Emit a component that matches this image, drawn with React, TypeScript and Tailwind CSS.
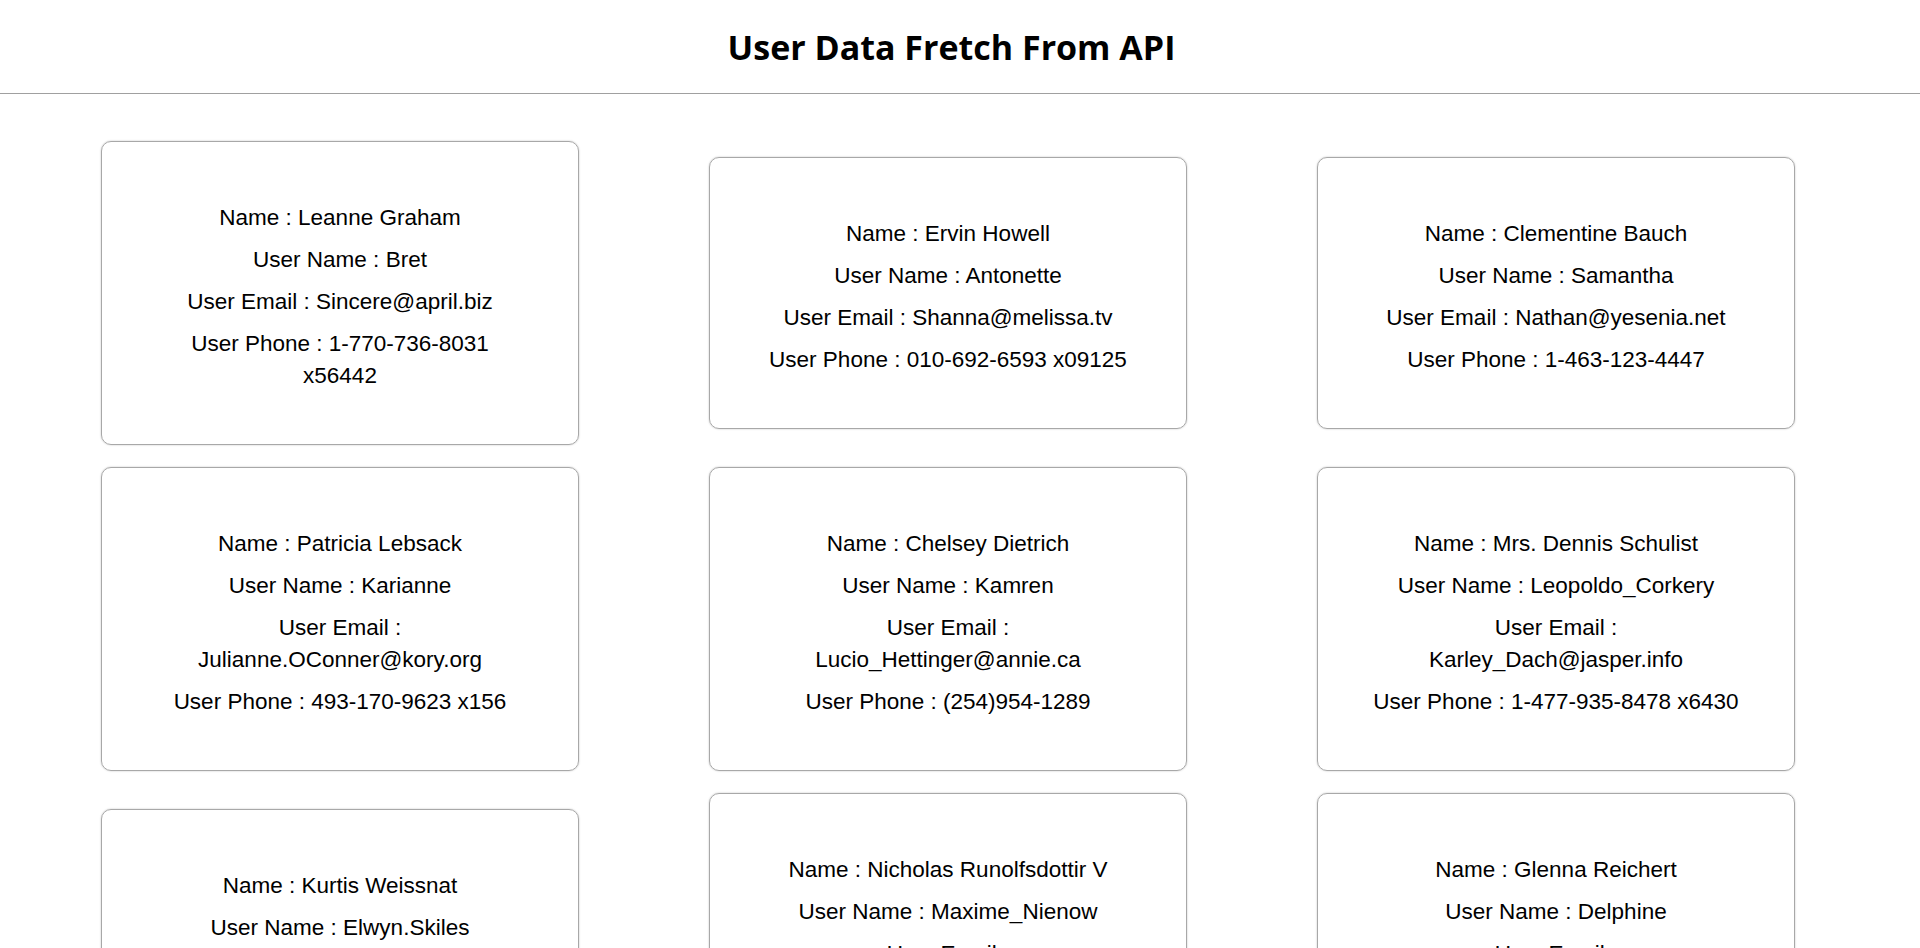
import React from 'react';

interface User {
  id: number;
  name: string;
  username: string;
  email: string;
  phone: string;
}

const users: User[] = [
  { id: 1, name: 'Leanne Graham', username: 'Bret', email: 'Sincere@april.biz', phone: '1-770-736-8031 x56442' },
  { id: 2, name: 'Ervin Howell', username: 'Antonette', email: 'Shanna@melissa.tv', phone: '010-692-6593 x09125' },
  { id: 3, name: 'Clementine Bauch', username: 'Samantha', email: 'Nathan@yesenia.net', phone: '1-463-123-4447' },
  { id: 4, name: 'Patricia Lebsack', username: 'Karianne', email: 'Julianne.OConner@kory.org', phone: '493-170-9623 x156' },
  { id: 5, name: 'Chelsey Dietrich', username: 'Kamren', email: 'Lucio_Hettinger@annie.ca', phone: '(254)954-1289' },
  { id: 6, name: 'Mrs. Dennis Schulist', username: 'Leopoldo_Corkery', email: 'Karley_Dach@jasper.info', phone: '1-477-935-8478 x6430' },
  { id: 7, name: 'Kurtis Weissnat', username: 'Elwyn.Skiles', email: 'Telly.Hoeger@billy.biz', phone: '210.067.6132' },
  { id: 8, name: 'Nicholas Runolfsdottir V', username: 'Maxime_Nienow', email: 'Sherwood@rosamond.me', phone: '586.493.6943 x140' },
  { id: 9, name: 'Glenna Reichert', username: 'Delphine', email: 'Chaim_McDermott@dana.io', phone: '(775)976-6794 x41206' },
  { id: 10, name: 'Clementina DuBuque', username: 'Moriah.Stanton', email: 'Rey.Padberg@karina.biz', phone: '024-648-3804' },
];

function UserCard({ user }: { user: User }) {
  return (
    <div className="w-[478px] px-[52px] pt-[60px] pb-[52px] border border-[#a8a8a8] rounded-[10px] shadow-[0_0_2px_rgba(0,0,0,0.25)] flex flex-col gap-[10px] text-center text-[22.5px] leading-[32px] text-black font-['Liberation_Sans',Arial,sans-serif]">
      <p>Name : {user.name}</p>
      <p>User Name : {user.username}</p>
      <p>User Email : {user.email}</p>
      <p>User Phone : {user.phone}</p>
    </div>
  );
}

export default function App() {
  return (
    <div className="min-h-screen bg-white font-['Open_Sans','Liberation_Sans',sans-serif]">
      <header className="pt-[25px] pb-[24px] border-b border-[#a0a0a0]">
        <h1 className="pr-[17px] text-center text-[34px] leading-[44px] font-bold text-black">User Data Fretch From API</h1>
      </header>
      <div className="flex flex-wrap items-center gap-x-[130px] gap-y-[22px] pl-[101px] pr-[36px] pt-[47px] pb-[40px]">
        {users.map((user) => (
          <UserCard key={user.id} user={user} />
        ))}
      </div>
    </div>
  );
}
